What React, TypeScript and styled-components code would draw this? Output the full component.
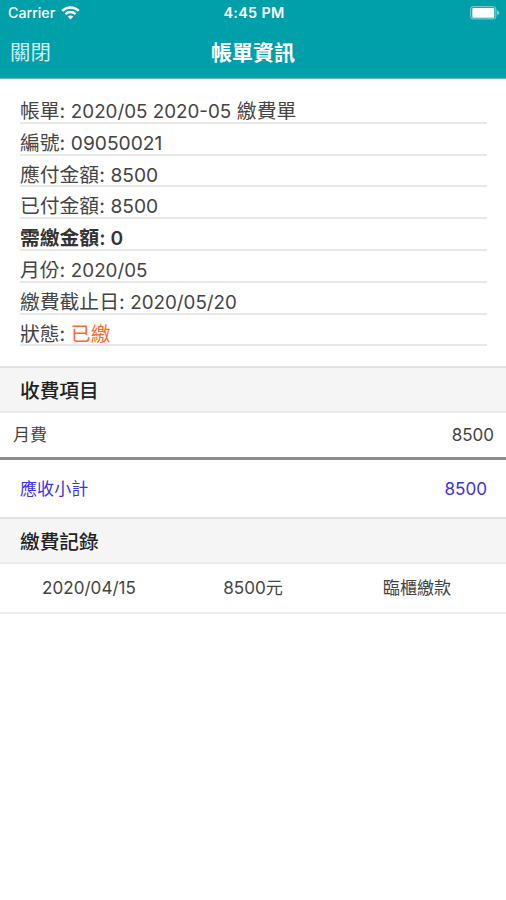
import React from 'react';
import styled, { createGlobalStyle } from 'styled-components';

const GlobalStyle = createGlobalStyle`
  * {
    box-sizing: border-box;
  }

  body {
    margin: 0;
    background-color: #fff;
    color: #444;
    font-family: Inter, 'Noto Sans CJK TC', sans-serif;
  }
`;

const Screen = styled.div`
  min-height: 900px;
  background-color: #fff;
`;

const Header = styled.header`
  height: 79px;
  background-color: #00a0aa;
  border-bottom: 1px solid #62bcc3;
  color: #fff;
`;

const StatusBar = styled.div`
  display: grid;
  grid-template-columns: 1fr auto 1fr;
  align-items: center;
  height: 26px;
  padding: 0 6px 0 8px;
  font-size: 14.2px;
  font-weight: 500;
  line-height: 26px;
`;

const Carrier = styled.div`
  display: flex;
  align-items: center;
  gap: 6px;
`;

const Clock = styled.div`
  font-size: 14.4px;
  font-weight: 600;
  letter-spacing: 0.3px;
`;

const Battery = styled.div`
  display: flex;
  justify-content: flex-end;
`;

const NavBar = styled.div`
  display: grid;
  grid-template-columns: 1fr auto 1fr;
  align-items: center;
  height: 52px;
  padding: 1px 10px 0;
`;

const CloseButton = styled.button`
  justify-self: start;
  padding: 0;
  border: none;
  background: none;
  color: #d3f0f2;
  font-family: inherit;
  font-size: 20.4px;
  line-height: 51px;
`;

const Title = styled.h1`
  margin: 0;
  font-size: 21px;
  font-weight: 700;
  line-height: 51px;
`;

const BillInfo = styled.ul`
  margin: 0;
  padding: 13px 19px 20px 20px;
  list-style: none;
`;

const InfoRow = styled.li<{ $bold?: boolean }>`
  height: 31.8px;
  padding-top: 4px;
  border-bottom: 2px solid #e8e8e8;
  color: ${({ $bold }) => ($bold ? '#333' : '#444')};
  font-size: 19.8px;
  font-weight: ${({ $bold }) => ($bold ? 600 : 400)};
  line-height: 30px;
  white-space: nowrap;
`;

const Value = styled.span<{ $date?: boolean }>`
  font-size: ${({ $date }) => ($date ? '18.8px' : '19.2px')};
`;

const Status = styled.span`
  color: #ff6a1f;
`;

const SectionTitle = styled.h2`
  height: 47px;
  margin: 0;
  padding: 0 20px;
  border-top: 2px solid #e2e2e2;
  border-bottom: 2px solid #ebebeb;
  background-color: #f5f5f5;
  color: #222;
  font-size: 19.7px;
  font-weight: 500;
  line-height: 46px;
`;

const FeeRow = styled.div`
  display: flex;
  justify-content: space-between;
  height: 47px;
  padding: 0 12px 0 13px;
  border-bottom: 3px solid #8c8c8c;
  font-size: 17px;
  line-height: 45px;
`;

const TotalRow = styled.div`
  display: flex;
  justify-content: space-between;
  height: 57px;
  padding: 0 19px 0 20px;
  color: #3c32e0;
  font-size: 17.1px;
  line-height: 57px;
`;

const RecordRow = styled.div`
  display: grid;
  grid-template-columns: 178px 150px 178px;
  height: 50px;
  border-bottom: 2px solid #ececec;
  font-size: 17.1px;
  line-height: 47px;
  text-align: center;
`;

interface InfoItem {
  label: string;
  value: React.ReactNode;
  bold?: boolean;
}

const infoItems: InfoItem[] = [
  { label: '帳單', value: <><Value $date>2020/05 2020-05</Value> 繳費單</> },
  { label: '編號', value: <Value>09050021</Value> },
  { label: '應付金額', value: <Value>8500</Value> },
  { label: '已付金額', value: <Value>8500</Value> },
  { label: '需繳金額', value: <Value>0</Value>, bold: true },
  { label: '月份', value: <Value $date>2020/05</Value> },
  { label: '繳費截止日', value: <Value $date>2020/05/20</Value> },
  { label: '狀態', value: <Status>已繳</Status> },
];

const WifiIcon: React.FC = () => (
  <svg width="19" height="14" viewBox="0 0 19 14" fill="none" stroke="#fff">
    <path d="M1.2 4.9C5.8 .3 13.2 .3 17.8 4.9" strokeWidth="2.5" />
    <path d="M4.4 8.1C7.2 5.3 11.8 5.3 14.6 8.1" strokeWidth="2.3" />
    <path d="M9.5 13.4L6.7 10.6Q9.5 8.2 12.3 10.6Z" fill="#fff" stroke="none" />
  </svg>
);

const BatteryIcon: React.FC = () => (
  <svg width="30" height="14" viewBox="0 0 30 14">
    <rect x="0.7" y="0.7" width="25.2" height="12.2" rx="2.5" fill="none" stroke="#8fd3d8" />
    <rect x="2.3" y="2.1" width="22" height="9.6" rx="1" fill="#fff" />
    <path d="M27.2 4.3Q29.4 5.4 29.4 6.8T27.2 9.3Z" fill="#8fd3d8" />
  </svg>
);

const App: React.FC = () => {
  return (
    <Screen>
      <GlobalStyle />
      <Header>
        <StatusBar>
          <Carrier>
            Carrier
            <WifiIcon />
          </Carrier>
          <Clock>4:45 PM</Clock>
          <Battery>
            <BatteryIcon />
          </Battery>
        </StatusBar>
        <NavBar>
          <CloseButton>關閉</CloseButton>
          <Title>帳單資訊</Title>
        </NavBar>
      </Header>

      <BillInfo>
        {infoItems.map((item) => (
          <InfoRow key={item.label} $bold={item.bold}>
            {item.label}: {item.value}
          </InfoRow>
        ))}
      </BillInfo>

      <SectionTitle>收費項目</SectionTitle>
      <FeeRow>
        <span>月費</span>
        <span>8500</span>
      </FeeRow>
      <TotalRow>
        <span>應收小計</span>
        <span>8500</span>
      </TotalRow>

      <SectionTitle>繳費記錄</SectionTitle>
      <RecordRow>
        <span>2020/04/15</span>
        <span>8500元</span>
        <span>臨櫃繳款</span>
      </RecordRow>
    </Screen>
  );
};

export default App;
